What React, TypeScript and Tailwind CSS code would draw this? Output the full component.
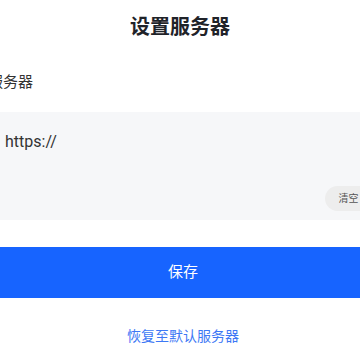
import React from "react";

export default function App() {
  return (
    <div
      className="w-[360px] h-[360px] overflow-hidden bg-white"
      style={{ fontFamily: 'Roboto, "Noto Sans CJK SC", "Noto Sans", sans-serif' }}
    >
      <div className="pt-[13px] h-[41px] text-center text-[20px] leading-[28px] font-bold text-[#1f2329]">
        设置服务器
      </div>
      <div className="ml-[-12px] w-[390px] flex flex-col">
        <div className="mt-[30px] text-[15px] leading-[22px] text-[#333]">服务器</div>
        <div className="mt-[19px] h-[108px] bg-[#f6f7f9] flex flex-col justify-between pl-[17px] pr-[6px] pt-[18px] pb-[9px]">
          <div className="text-[16px] leading-[24px] text-[#333]">https://</div>
          <div className="flex justify-end">
            <div className="h-[25px] w-[47px] rounded-full bg-[#ededed] flex items-center justify-center text-[10px] text-[#555]">
              清空
            </div>
          </div>
        </div>
        <button className="mt-[27px] h-[51px] bg-[#1764ff] text-white text-[15px] flex items-center justify-center">
          保存
        </button>
        <div className="mt-[28px] text-center text-[14px] leading-[20px] text-[#3d78f5]">
          恢复至默认服务器
        </div>
      </div>
    </div>
  );
}
